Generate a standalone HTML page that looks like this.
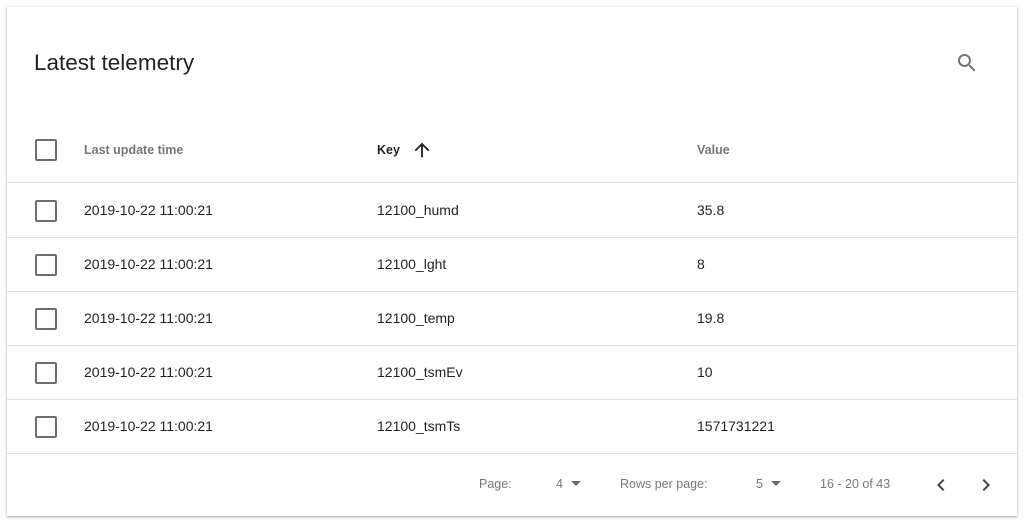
<!DOCTYPE html>
<html><head><style>
body{margin:0;width:1024px;height:532px;background:#fff;font-family:"Liberation Sans",sans-serif;overflow:hidden}
.card{position:absolute;left:7px;top:7px;width:1010px;height:509px;background:#fff;box-shadow:0 1px 3px rgba(0,0,0,.3),0 1px 1px rgba(0,0,0,.1)}
.title{position:absolute;left:27px;top:43px;font-size:22.5px;color:rgba(0,0,0,.87)}
.row{position:absolute;left:0;width:1010px;height:54px;border-bottom:1px solid #e0e0e0;font-size:14px;color:rgba(0,0,0,.87)}
.row span{position:absolute;top:19px}
.cb{position:absolute;left:28px;top:17px;width:18px;height:18px;border:2px solid #6e6e6e;border-radius:2px}
.h{font-size:12.5px;color:rgba(0,0,0,.54);font-weight:bold}
.f{position:absolute;top:470px;font-size:12.5px;color:rgba(0,0,0,.54)}
.tri{display:inline-block;width:0;height:0;border-left:5px solid transparent;border-right:5px solid transparent;border-top:5px solid #666;margin-left:8px;vertical-align:2px}
</style></head><body>
<div class="card">
<div class="title">Latest telemetry</div>
<svg style="position:absolute;left:948px;top:44px" width="24" height="24" viewBox="0 0 24 24"><path fill="#757575" d="M15.5 14h-.79l-.28-.27A6.470 6.470 0 0016 9.5 6.5 6.5 0 109.5 16c1.61 0 3.090-.59 4.230-1.57l.27.28v.79l5 4.99L20.490 19l-4.990-5zm-6 0C7.010 14 5 11.990 5 9.5S7.010 5 9.5 5 14 7.010 14 9.5 11.990 14 9.5 14z"/></svg>
<div class="row" style="top:122px;height:53px"><div class="cb" style="top:10px"></div><span class="h" style="left:77px;top:14px">Last update time</span><span class="h" style="left:370px;top:14px;color:rgba(0,0,0,.87)">Key</span>
<svg style="position:absolute;left:404px;top:10px" width="22" height="22" viewBox="0 0 24 24"><path fill="#222" d="M4 12l1.41 1.41L11 7.830V20h2V7.830l5.580 5.590L20 12l-8-8-8 8z"/></svg>
<span class="h" style="left:690px;top:14px">Value</span></div>
<div class="row" style="top:176px"><div class="cb"></div><span style="left:77px">2019-10-22 11:00:21</span><span style="left:370px">12100_humd</span><span style="left:690px">35.8</span></div>
<div class="row" style="top:230px"><div class="cb"></div><span style="left:77px">2019-10-22 11:00:21</span><span style="left:370px">12100_lght</span><span style="left:690px">8</span></div>
<div class="row" style="top:284px"><div class="cb"></div><span style="left:77px">2019-10-22 11:00:21</span><span style="left:370px">12100_temp</span><span style="left:690px">19.8</span></div>
<div class="row" style="top:338px"><div class="cb"></div><span style="left:77px">2019-10-22 11:00:21</span><span style="left:370px">12100_tsmEv</span><span style="left:690px">10</span></div>
<div class="row" style="top:392px"><div class="cb"></div><span style="left:77px">2019-10-22 11:00:21</span><span style="left:370px">12100_tsmTs</span><span style="left:690px">1571731221</span></div>
<span class="f" style="left:472px">Page:</span>
<span class="f" style="left:549px">4<i class="tri"></i></span>
<span class="f" style="left:613px">Rows per page:</span>
<span class="f" style="left:749px">5<i class="tri"></i></span>
<span class="f" style="left:813px">16 - 20 of 43</span>
<svg style="position:absolute;left:922px;top:466px" width="24" height="24" viewBox="0 0 24 24"><path fill="#444" d="M15.41 7.41L14 6l-6 6 6 6 1.41-1.41L10.83 12z"/></svg>
<svg style="position:absolute;left:967px;top:466px" width="24" height="24" viewBox="0 0 24 24"><path fill="#444" d="M10 6L8.59 7.41 13.17 12l-4.58 4.59L10 18l6-6z"/></svg>
</div>
</body></html>
